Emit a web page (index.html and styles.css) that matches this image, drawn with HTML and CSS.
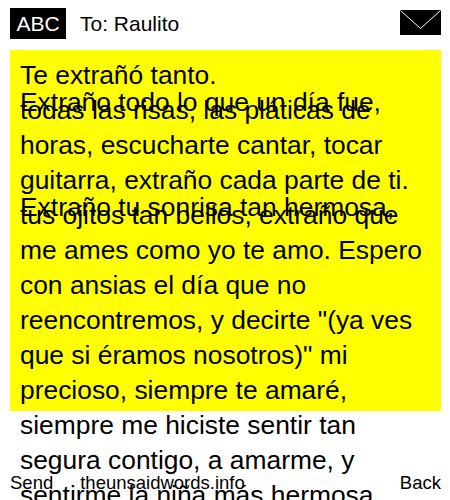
FILE: index.html
```html
<!DOCTYPE html>
<html lang="en">
<head>
  <meta charset="UTF-8" />
  <title>Message</title>
  <link rel="stylesheet" href="styles.css">
</head>
<body>
  <header class="top">
    <span class="mode">ABC</span>
    <span class="to">To: Raulito</span>
    <svg class="envelope" width="41" height="25" viewBox="0 0 41 25">
      <rect width="41" height="25" fill="#000"/>
      <path d="M0.5 0.5 L20.5 18.5 L40.5 0.5" fill="none" stroke="#fff" stroke-width="1"/>
    </svg>
  </header>

  <main class="message">
    <p class="line">Te extrañó tanto.</p>
    <p class="line head">Extraño todo lo que un día fue,</p>
    <p class="line under">todas las risas, las pláticas de</p>
    <p class="line">horas, escucharte cantar, tocar</p>
    <p class="line">guitarra, extraño cada parte de ti.</p>
    <p class="line head">Extraño tu sonrisa tan hermosa,</p>
    <p class="line under">tus ojitos tan bellos, extraño que</p>
    <p class="line">me ames como yo te amo. Espero</p>
    <p class="line">con ansias el día que no</p>
    <p class="line">reencontremos, y decirte "(ya ves</p>
    <p class="line">que si éramos nosotros)" mi</p>
    <p class="line">precioso, siempre te amaré,</p>
    <p class="line">siempre me hiciste sentir tan</p>
    <p class="line">segura contigo, a amarme, y</p>
    <p class="line">sentirme la niña más hermosa</p>
  </main>

  <footer class="bottom">
    <span>Send</span>
    <span class="site">theunsaidwords.info</span>
    <span class="back">Back</span>
  </footer>
</body>
</html>
```

FILE: styles.css
```css
* {
  box-sizing: border-box;
  margin: 0;
  padding: 0;
}

html,
body {
  height: 500px;
  overflow: hidden;
}

body {
  position: relative;
  font-family: "Liberation Sans", Arial, sans-serif;
  background: #fff;
  color: #000;
}

.top {
  display: flex;
  align-items: center;
  height: 50px;
  padding: 0 9px 3px 10px;
}

.mode {
  width: 56px;
  height: 31px;
  background: #000;
  color: #fff;
  font-size: 21px;
  line-height: 31px;
  text-align: center;
}

.to {
  margin-left: 14px;
  font-size: 21px;
}

.envelope {
  margin-left: auto;
  margin-bottom: 2px;
}

.message {
  width: 431px;
  height: 361px;
  margin-left: 10px;
  padding: 8px 10px 0;
  background: #ff0;
  font-size: 26.4px;
}

.line {
  height: 35px;
  line-height: 35px;
  white-space: nowrap;
}

/* the message lines run into each other here, same as the original */
.head {
  margin-top: -8px;
}

.under {
  margin-top: -27px;
}

.bottom {
  position: absolute;
  left: 10px;
  right: 9px;
  top: 472px;
  display: flex;
  font-size: 18.5px;
  line-height: 21px;
}

.site {
  margin-left: 27px;
}

.back {
  margin-left: auto;
}
```
